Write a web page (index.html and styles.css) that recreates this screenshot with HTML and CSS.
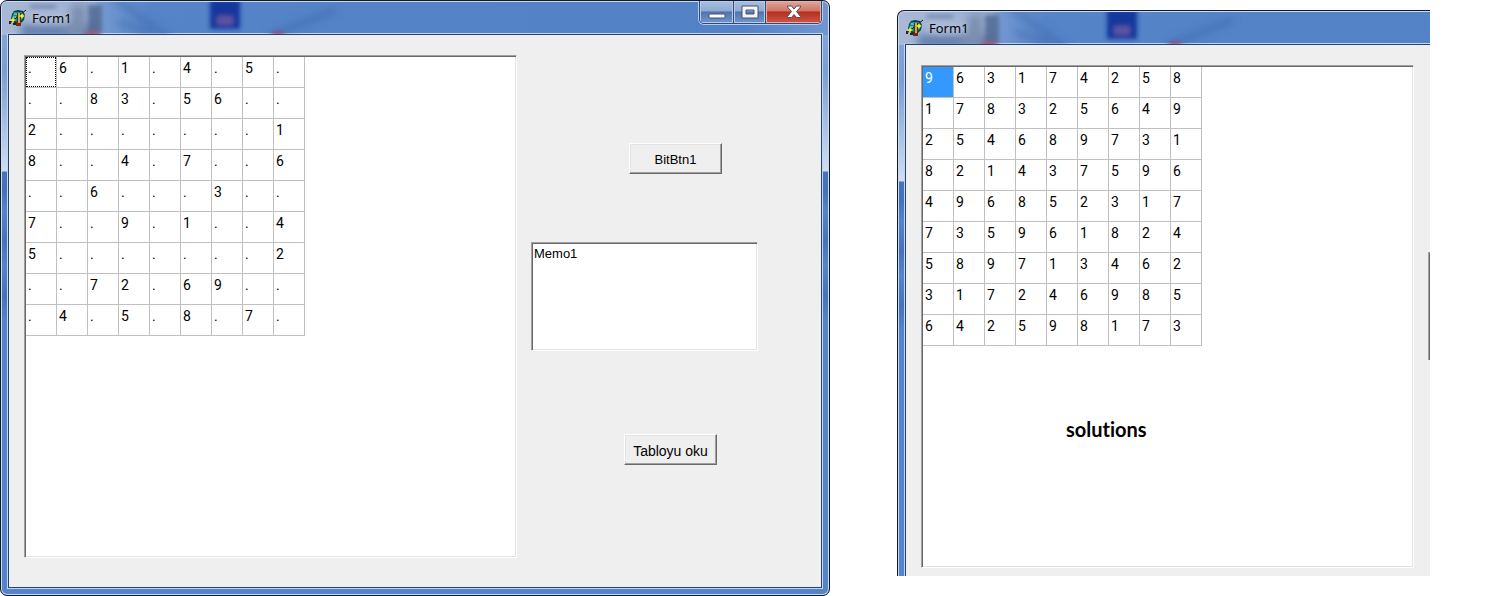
FILE: index.html
```html
<!DOCTYPE html>
<html lang="en">
<head>
<meta charset="utf-8">
<title>Form1</title>
<link rel="stylesheet" href="styles.css">
</head>
<body>
<svg class="defs" aria-hidden="true">
  <defs>
    <filter id="soft" x="-50%" y="-50%" width="200%" height="200%"><feGaussianBlur stdDeviation="2"/></filter>
    <filter id="softer" x="-50%" y="-50%" width="200%" height="200%"><feGaussianBlur stdDeviation="4"/></filter>
    <symbol id="backdrop" viewBox="0 0 360 32">
      <g filter="url(#softer)">
        <rect x="-10" y="-4" width="105" height="40" fill="#a9b8d4" opacity=".7"/>
        <rect x="18" y="22" width="76" height="14" fill="#6480ad"/>
        <path d="M70 2h14v30H62z" fill="#7c8fb0"/>
        <path d="M112 -4l55 40M150 32l-34-12" stroke="#3d66a8" stroke-width="5" opacity=".7"/>
        <path d="M268 34l66-26" stroke="#3d66a8" stroke-width="5" opacity=".7"/>
      </g>
      <g filter="url(#soft)">
        <rect x="86" y="3" width="14" height="28" fill="#4d6690" opacity=".8"/>
        <path d="M28 3h26v3H28z" fill="#53698f" opacity=".7"/>
        <rect x="208" y="-2" width="30" height="29" fill="#17379c"/>
        <rect x="215" y="14" width="16" height="9" fill="#6d5aa6" opacity=".8"/>
        <ellipse cx="90" cy="32" rx="9" ry="2" fill="#b0506c"/>
        <ellipse cx="276" cy="32" rx="7" ry="2" fill="#a33c68"/>
      </g>
    </symbol>
    <symbol id="app" viewBox="0 0 18 18">
      <path d="M5 2l4-1 5 1 2 4-1 5-3 3H5L2 10 3 5z" fill="#0b3f43"/>
      <path d="M5 3h8l2 3-1 4-4 3-5-1-2-3 1-4z" fill="#168c8d"/>
      <path d="M5 4h4v2H5zM4 7h3v2H4z" fill="#58b7ae"/>
      <path d="M1 14L17 1" stroke="#151a12" stroke-width="1"/>
      <path d="M8 4h4v11H8z" fill="#473719"/>
      <path d="M9 4h2v10H9z" fill="#c9ad4d"/>
      <path d="M4 8l1 2 2 1-2 1-1 2-1-2-2-1 2-1zM13 4l1 2 2 1-2 1-1 2-1-2-2-1 2-1z" fill="#f4f02c"/>
      <path d="M7 14h5v3H7z" fill="#802017"/>
      <path d="M0 12h2v3H0zM4 14h3v2H4z" fill="#20271c"/>
    </symbol>
  </defs>
</svg>
<main class="desk">
  <section class="window" aria-label="Form1">
    <header class="titlebar">
      <svg class="backdrop"><use href="#backdrop"/></svg>
      <svg class="app-icon"><use href="#app"/></svg>
      <h1 class="caption">Form1</h1>
      <div class="controls">
        <button class="control" aria-label="Minimize"><svg width="18" height="16"><rect x="1" y="10" width="16" height="4" rx="1" fill="#fff" stroke="#46536f"/></svg></button>
        <button class="control control-max" aria-label="Maximize"><svg width="18" height="16"><path d="M1 2h16v12H1zM5 6v4h8V6z" fill="#f5f5f7" stroke="#46536f" fill-rule="evenodd"/></svg></button>
        <button class="control control-close" aria-label="Close"><svg width="16" height="16"><path d="M1.500 2h4L8 5l2.500-3h4v1L10.500 7.500l4 5v1h-4L8 10.500 5.500 13.500h-4v-1l4-5-4-4.500z" fill="#fff" stroke="#59485a"/></svg></button>
      </div>
    </header>
    <div class="client">
      <div class="sunken board">
        <table class="grid">
          <tr><td class="focused">.<td>6<td>.<td>1<td>.<td>4<td>.<td>5<td>.
          <tr><td>.<td>.<td>8<td>3<td>.<td>5<td>6<td>.<td>.
          <tr><td>2<td>.<td>.<td>.<td>.<td>.<td>.<td>.<td>1
          <tr><td>8<td>.<td>.<td>4<td>.<td>7<td>.<td>.<td>6
          <tr><td>.<td>.<td>6<td>.<td>.<td>.<td>3<td>.<td>.
          <tr><td>7<td>.<td>.<td>9<td>.<td>1<td>.<td>.<td>4
          <tr><td>5<td>.<td>.<td>.<td>.<td>.<td>.<td>.<td>2
          <tr><td>.<td>.<td>7<td>2<td>.<td>6<td>9<td>.<td>.
          <tr><td>.<td>4<td>.<td>5<td>.<td>8<td>.<td>7<td>.
        </table>
      </div>
      <div class="panel">
        <button class="push push-solve">BitBtn1</button>
        <textarea class="sunken memo" aria-label="Memo">Memo1</textarea>
        <button class="push push-read">Tabloyu oku</button>
      </div>
    </div>
  </section>
  <section class="window window-cut" aria-label="Form1 solved">
    <header class="titlebar">
      <svg class="backdrop"><use href="#backdrop"/></svg>
      <svg class="app-icon"><use href="#app"/></svg>
      <h2 class="caption">Form1</h2>
    </header>
    <div class="client">
      <div class="sunken board">
        <table class="grid">
          <tr><td class="selected">9<td>6<td>3<td>1<td>7<td>4<td>2<td>5<td>8
          <tr><td>1<td>7<td>8<td>3<td>2<td>5<td>6<td>4<td>9
          <tr><td>2<td>5<td>4<td>6<td>8<td>9<td>7<td>3<td>1
          <tr><td>8<td>2<td>1<td>4<td>3<td>7<td>5<td>9<td>6
          <tr><td>4<td>9<td>6<td>8<td>5<td>2<td>3<td>1<td>7
          <tr><td>7<td>3<td>5<td>9<td>6<td>1<td>8<td>2<td>4
          <tr><td>5<td>8<td>9<td>7<td>1<td>3<td>4<td>6<td>2
          <tr><td>3<td>1<td>7<td>2<td>4<td>6<td>9<td>8<td>5
          <tr><td>6<td>4<td>2<td>5<td>9<td>8<td>1<td>7<td>3
        </table>
        <p class="note">solutions</p>
      </div>
      <div class="memo-edge"></div>
    </div>
  </section>
</main>
</body>
</html>
```
FILE: styles.css
```css
* { box-sizing: border-box; }

body {
  margin: 0;
  background: #fff;
  color: #000;
  font: 13px/16px "Liberation Sans", Arial, sans-serif;
}

.defs { position: absolute; width: 0; height: 0; }

.desk {
  display: grid;
  grid-template-columns: 830fr 533fr;
  column-gap: 67px;
  padding-right: 62px;
  min-height: 100vh;
}

.window {
  display: flex;
  flex-direction: column;
  min-width: 0;
  padding: 0 7px 7px;
  border: 1px solid #10192b;
  border-radius: 7px;
  overflow: hidden;
  box-shadow: inset 0 0 0 1px #c9dcf2;
  background:
    linear-gradient(90deg, #a5b8d9 0, #8ea9d6 60px, #5584c9 150px, #5281c6 740px, #7396cf) 0 0 / 100% 34px no-repeat,
    linear-gradient(#8eabd9 0, #7b9dd0 70px, #aec4e4 130px, #d0def0 170px, #4674b8 171px, #4472b6 190px, #5584c9 210px, #4673b7 240px, #5584c9 265px, #4673b7 295px, #5584c9 320px, #5584c9);
}

.window-cut {
  margin: 10px 0 20px;
  padding: 0 0 0 7px;
  border-width: 1px 0 0 1px;
  border-radius: 7px 0 0 0;
  box-shadow: inset 1px 1px 0 #c9dcf2;
}

.titlebar {
  position: relative;
  display: flex;
  align-items: flex-start;
  height: 33px;
  flex: none;
}

.backdrop {
  position: absolute;
  left: -6px;
  top: 1px;
  width: 360px;
  height: 32px;
}

.app-icon {
  position: relative;
  width: 18px;
  height: 18px;
  margin: 8px 0 0 1px;
}

.caption {
  position: relative;
  margin: 8px 0 0 5px;
  font: 13px/18px "Noto Sans", sans-serif;
  text-shadow: 0 0 5px #c7d1e3, 0 0 8px #c7d1e3;
}

.controls {
  display: flex;
  height: 23px;
  margin-left: auto;
  border: 1px solid #34496f;
  border-top: 0;
  border-radius: 0 0 5px 5px;
  box-shadow: 0 0 0 1px #b5cdee;
  overflow: hidden;
}

.control {
  display: flex;
  justify-content: center;
  align-items: center;
  width: 34px;
  padding: 0;
  border: 0;
  border-right: 1px solid #34496f;
  background: linear-gradient(#a9bfdf, #8faad3 45%, #5173aa 50%, #6f97d0);
  box-shadow: inset 0 0 0 1px #b5cbea;
}

.control svg { flex: none; }

.control-max { width: 32px; }

.control-close {
  width: 55px;
  border-right: 0;
  background: linear-gradient(#dda99c, #cf7567 45%, #b62e1c 50%, #cb584b);
  box-shadow: inset 0 0 0 1px #e8aea5;
}

.client {
  display: flex;
  flex: 1;
  min-height: 0;
  padding: 20px 0 29px 15px;
  border: 1px solid #24426f;
  box-shadow: 0 0 0 1px #c2d7f1;
  background: #efefef;
}

.window-cut .client {
  padding-bottom: 8px;
  border-width: 1px 0 0 1px;
}

.sunken {
  border: 1px solid;
  border-color: #a0a0a0 #fff #fff #a0a0a0;
  box-shadow: inset 1px 1px 0 #696969, inset -1px -1px 0 #e3e3e3;
  background: #fff;
}

.board {
  flex: 0 1 493px;
  min-width: 0;
  padding: 1px;
  overflow: hidden;
}

.grid { border-spacing: 0; }

.grid td {
  position: relative;
  width: 31px;
  height: 31px;
  padding: 2px;
  border: solid #c0c0c0;
  border-width: 0 1px 1px 0;
  font: 14px/18px Roboto, sans-serif;
  vertical-align: top;
}

.grid .focused::after {
  content: "";
  position: absolute;
  inset: 0;
  border: 1px dotted #000;
}

.grid .selected {
  background: #3399ff;
  color: #fff;
}

.note {
  margin: 69px 0 0 143px;
  font: bold 20px/28px Lato, sans-serif;
  font-variant-ligatures: none;
}

.panel {
  display: flex;
  flex: 1;
  flex-direction: column;
  align-items: flex-start;
  padding: 88px 0 0 14px;
}

.push {
  width: 93px;
  height: 31px;
  padding: 2px 0 0;
  border: 1px solid;
  border-color: #fff #696969 #696969 #fff;
  box-shadow: inset -1px -1px 0 #a0a0a0, inset 1px 1px 0 #e3e3e3;
  background: #efefef;
  color: #000;
  font: 13px/16px "Liberation Sans", Arial, sans-serif;
}

.push-solve { margin-left: 98px; }
.push-read { margin: 83px 0 0 93px; font-size: 14px; }

.memo {
  width: 227px;
  height: 109px;
  margin-top: 68px;
  padding: 3px 2px;
  color: #000;
  font: 13px/16px "Liberation Sans", Arial, sans-serif;
  resize: none;
}

.memo-edge {
  width: 2px;
  height: 108px;
  margin: 187px 0 0 auto;
  border: solid #a0a0a0;
  border-width: 1px 0 0 1px;
  background: #696969;
}
```
